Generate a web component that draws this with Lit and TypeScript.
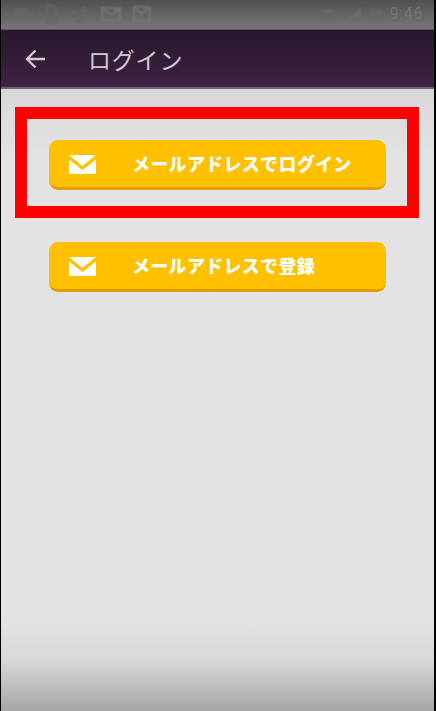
import { LitElement, html, css, svg } from "lit";
import { customElement } from "lit/decorators.js";

const mailIcon = svg`
  <path d="M0 0H27L13.5 11Z" fill="#fff" />
  <path d="M0 4.5V19H27V4.5L13.5 15Z" fill="#fff" />
`;

@customElement("app-root")
class AppRoot extends LitElement {
  static override styles = css`
    :host {
      display: block;
      width: 436px;
      height: 711px;
      overflow: hidden;
      background: #000;
      font-family: "Noto Sans CJK JP", "Liberation Sans", sans-serif;
    }

    .screen {
      position: relative;
      width: 433px;
      height: 711px;
      margin-left: 1px;
      display: flex;
      flex-direction: column;
      background: #e3e3e3;
    }

    .status {
      height: 29px;
      flex: none;
      box-sizing: border-box;
      padding: 0 11px 2px 14px;
      display: flex;
      align-items: center;
      background: linear-gradient(#505050, #767676);
      color: #666;
    }

    .status svg {
      display: block;
      flex: none;
      filter: blur(0.8px);
    }

    .left-icons {
      display: flex;
      align-items: center;
      gap: 12px;
    }

    .right-icons {
      display: flex;
      align-items: center;
      gap: 9px;
      margin-left: auto;
    }

    .wifi {
      margin-right: 4px;
    }

    .clock {
      font-family: "Roboto", sans-serif;
      font-size: 16px;
      line-height: 18px;
      letter-spacing: 0.6px;
      color: #757575;
      filter: blur(0.6px);
    }

    .toolbar {
      height: 60px;
      flex: none;
      box-sizing: border-box;
      display: flex;
      align-items: center;
      gap: 42px;
      padding: 0 0 0 24px;
      border-top: 1px solid #5d5163;
      border-bottom: 2px solid #6d5f75;
      background: linear-gradient(#28162b, #3e2343);
      color: #cfcbd1;
    }

    .toolbar svg {
      display: block;
      flex: none;
    }

    .title {
      font-size: 23px;
      line-height: 30px;
      font-weight: 400;
      letter-spacing: 0.8px;
    }

    .content {
      flex: 1;
      display: flex;
      flex-direction: column;
      align-items: flex-start;
      gap: 52px;
      padding: 51px 0 0 48px;
      background: linear-gradient(
        #d9d7da 0,
        #e3e3e3 70px,
        #e3e3e3 530px,
        #d9d9d9 570px,
        #a6a6a6 622px
      );
    }

    .btn {
      width: 337px;
      height: 50px;
      box-sizing: border-box;
      display: flex;
      align-items: center;
      padding: 1px 0 0 20px;
      border: 0;
      border-bottom: 3px solid #e49c00;
      border-radius: 9px;
      background: #ffc000;
      color: #fff;
      font-family: inherit;
    }

    .btn svg {
      display: block;
      flex: none;
    }

    .btn span {
      margin: 0 0 3px 36px;
      font-size: 18px;
      line-height: 24px;
      font-weight: 900;
      letter-spacing: 0.3px;
      white-space: nowrap;
    }

    .highlight {
      position: absolute;
      left: 14px;
      top: 107px;
      width: 404px;
      height: 111px;
      box-sizing: border-box;
      border: 12px solid #ff0000;
    }
  `;

  override render() {
    return html`
      <div class="screen">
        <div class="status">
          <div class="left-icons">
            <svg width="18" height="12" viewBox="0 0 18 12" fill="currentColor">
              <rect x="0" y="1" width="13" height="10" />
              <path d="M13 6L18 2V11Z" />
            </svg>
            <svg width="12" height="18" viewBox="0 0 12 18" fill="none" stroke="currentColor" stroke-width="2">
              <path d="M2 1H8L11 4V17H2Z" />
            </svg>
            <svg width="20" height="18" viewBox="0 0 20 18" fill="currentColor">
              <circle cx="5" cy="8" r="3" />
              <circle cx="15" cy="5" r="3" />
              <circle cx="10" cy="15" r="2.5" />
            </svg>
            <svg width="20" height="14" viewBox="0 0 20 14" fill="none" stroke="#767676" stroke-width="2">
              <path d="M1 1H19V13H1ZM1 2L10 8L19 2" />
            </svg>
            <svg width="18" height="16" viewBox="0 0 18 16" fill="none" stroke="#767676" stroke-width="2">
              <path d="M1 1H17V15H1ZM3 3L9 8L15 3" />
            </svg>
          </div>
          <div class="right-icons">
            <svg class="wifi" width="14" height="10" viewBox="0 0 14 10" fill="currentColor">
              <path d="M0 0H14L7 10Z" />
            </svg>
            <svg width="14" height="12" viewBox="0 0 14 12" fill="#6c6c6c">
              <path d="M0 12L14 0V12Z" />
            </svg>
            <svg width="11" height="9" viewBox="0 0 11 9" fill="currentColor">
              <rect width="11" height="9" />
            </svg>
            <span class="clock">9:46</span>
          </div>
        </div>
        <div class="toolbar">
          <svg width="21" height="20" viewBox="0 0 21 20" fill="none" stroke="currentColor" stroke-width="2.4">
            <path d="M20 10H2M10.5 1.5L2 10L10.5 18.5" />
          </svg>
          <div class="title">ログイン</div>
        </div>
        <div class="content">
          <button class="btn">
            <svg width="27" height="19" viewBox="0 0 27 19">${mailIcon}</svg>
            <span>メールアドレスでログイン</span>
          </button>
          <button class="btn">
            <svg width="27" height="19" viewBox="0 0 27 19">${mailIcon}</svg>
            <span>メールアドレスで登録</span>
          </button>
        </div>
        <div class="highlight"></div>
      </div>
    `;
  }
}

// Prevent tree-shaking
void AppRoot;
